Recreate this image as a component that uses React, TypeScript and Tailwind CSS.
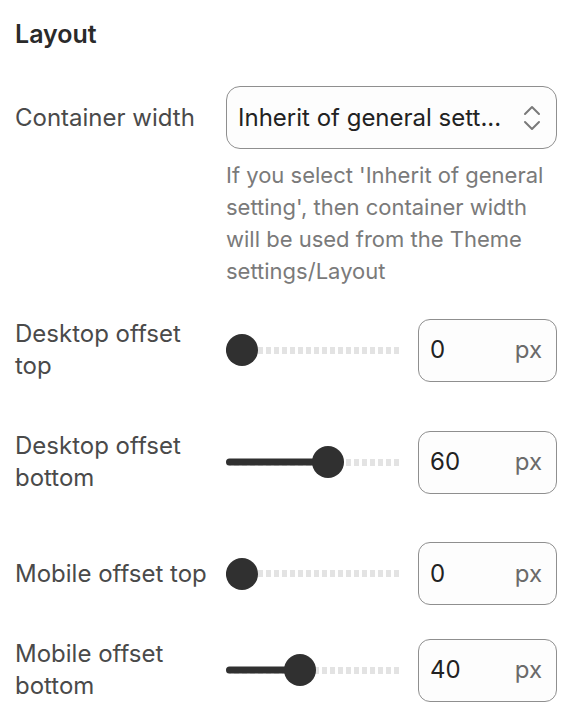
import { useState } from "react"

type Row = {
    label: string
    value: number
    className: string
}

const rows: Row[] = [
    { label: "Desktop offset top", value: 0, className: "mt-[31px]" },
    { label: "Desktop offset bottom", value: 60, className: "mt-[48px]" },
    { label: "Mobile offset top", value: 0, className: "mt-[48px]" },
    { label: "Mobile offset bottom", value: 40, className: "mt-[33px]" },
]

function Slider({ value }: { value: number }) {
    // thumb travels between 16px and width-16px
    const pos = `calc(16px + (100% - 32px) * ${value / 100})`
    return (
        <div className="relative h-[63px] w-[176px] shrink-0 flex items-center">
            <div className="h-[7px] w-full rounded-full bg-[repeating-linear-gradient(90deg,#e3e3e3_0_5px,transparent_5px_8px)]" />
            <div className="absolute left-0 top-1/2 -translate-y-1/2 h-[7px] rounded-full bg-[#303030]" style={{ width: pos }} />
            <div className="absolute top-1/2 -translate-y-1/2 -translate-x-1/2 w-8 h-8 rounded-full bg-[#303030]" style={{ left: pos }} />
        </div>
    )
}

function UpDown() {
    return (
        <svg width="18" height="28" viewBox="0 0 18 28" fill="none" stroke="#7a7a7a" strokeWidth="2" strokeLinecap="round" strokeLinejoin="round">
            <path d="M2 10 L9 3 L16 10" />
            <path d="M2 18 L9 25 L16 18" />
        </svg>
    )
}

export default function App() {
    const [values] = useState(rows.map(r => r.value))

    return (
        <div className="w-[574px] h-[724px] bg-white pl-[15px] pr-[17px] pt-[18px] font-['Inter',sans-serif] text-[24px] leading-[32px] overflow-hidden">
            <h2 className="font-semibold text-[25px] text-[#2a2a2a]">Layout</h2>

            <div className="flex mt-[36px]">
                <div className="w-[211px] shrink-0 text-[#4a4a4a] h-[63px] flex items-center">Container width</div>
                <div className="flex-1">
                    <div className="h-[63px] rounded-[14px] border border-[#8f8f8f] bg-[#fdfdfd] flex items-center pl-[11px] pr-[15px]">
                        <span className="flex-1 text-[#222] whitespace-nowrap">Inherit of general sett...</span>
                        <UpDown />
                    </div>
                    <p className="mt-[10px] text-[#7a7a7a] text-[22px]">
                        If you select 'Inherit of general setting', then container width will be used from the Theme settings/Layout
                    </p>
                </div>
            </div>

            {rows.map((r, i) => (
                <div key={r.label} className={`flex items-center ${r.className}`}>
                    <div className="w-[211px] shrink-0 pr-[10px] text-[#4a4a4a]">{r.label}</div>
                    <div className="flex-1 flex items-center gap-4">
                        <Slider value={values[i]} />
                        <div className="flex-1 h-[63px] rounded-[12px] border border-[#8f8f8f] bg-[#fdfdfd] flex items-center justify-between pl-[11px] pr-[14px]">
                            <span className="text-[#222]">{values[i]}</span>
                            <span className="text-[#6a6a6a]">px</span>
                        </div>
                    </div>
                </div>
            ))}
        </div>
    )
}
